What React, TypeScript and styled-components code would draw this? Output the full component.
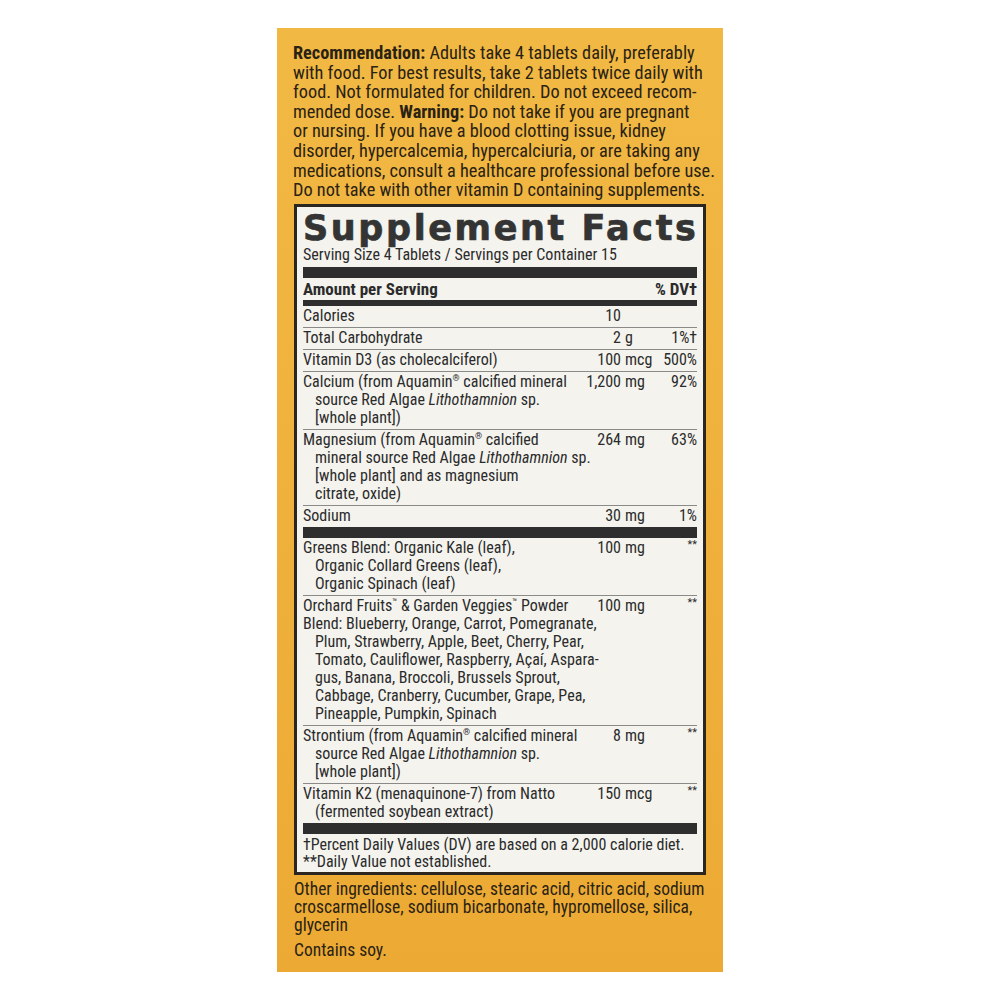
import React from "react";
import styled, { createGlobalStyle } from "styled-components";

const Global = createGlobalStyle`
  html, body { margin: 0; padding: 0; background: #ffffff; }
  body {
    font-family: Roboto, "Liberation Sans", sans-serif;
    font-stretch: 82%;
  }
`;

const Page = styled.div`
  display: flex;
  justify-content: center;
  padding-top: 28px;
  padding-bottom: 28px;
`;

const Panel = styled.div`
  width: 446px;
  height: 944px;
  box-sizing: border-box;
  padding: 15px 16px 0 16px;
  background: linear-gradient(180deg, #f1b944 0%, #efb13c 50%, #ecaa34 100%);
  color: #2a2214;
  display: flex;
  flex-direction: column;
`;

const Para = styled.div<{ $size?: number; $lh?: number }>`
  font-size: ${(p) => p.$size ?? 18.3}px;
  line-height: ${(p) => p.$lh ?? 19.6}px;
`;

const Line = styled.div<{ $indent?: boolean }>`
  white-space: nowrap;
  padding-left: ${(p) => (p.$indent ? 12 : 0)}px;
`;

const Facts = styled.div`
  margin: 4px 0 0 1px;
  width: 412px;
  box-sizing: border-box;
  border: 3px solid #2b2620;
  background: #f4f3ee;
  padding: 0 6px 0 6px;
  color: #2b2b2b;
  font-size: 16px;
  line-height: 18px;
`;

const Title = styled.div`
  font-family: "DejaVu Sans", sans-serif;
  font-stretch: normal;
  font-weight: 700;
  font-size: 35px;
  line-height: 36px;
  letter-spacing: 2.6px;
  color: #333433;
  -webkit-text-stroke: 0.7px #333433;
  white-space: nowrap;
  margin-top: 3px;
`;

const Serving = styled.div`
  font-size: 16px;
  line-height: 18px;
`;

const Bar = styled.div<{ $h: number; $mt?: number }>`
  height: ${(p) => p.$h}px;
  margin-top: ${(p) => p.$mt ?? 0}px;
  background: #2e2e2e;
`;

const Row = styled.div<{ $line?: boolean }>`
  display: grid;
  grid-template-columns: 274px 44px 36px 40px;
  border-top: ${(p) => (p.$line ? "1px solid #8a8a88" : "none")};
  padding: 1px 0 2px 0;
`;

const Name = styled.div``;

const Num = styled.div`
  text-align: right;
  white-space: nowrap;
`;

const Unit = styled.div`
  padding-left: 4px;
  white-space: nowrap;
`;

const DV = styled.div`
  text-align: right;
  white-space: nowrap;
`;

const Stars = styled.span`
  font-size: 11px;
  line-height: 10px;
  vertical-align: top;
  position: relative;
  top: 1px;
`;

const HeadRow = styled.div`
  display: flex;
  justify-content: space-between;
  font-weight: 700;
  font-size: 17px;
  line-height: 22px;
`;

const Sup = styled.sup`
  font-size: 9px;
  line-height: 0;
  vertical-align: 6px;
`;

const Foot = styled.div`
  padding: 2px 0 2px 0;
  font-size: 16px;
  line-height: 17px;
`;

const Other = styled(Para)`
  margin-top: 5px;
  padding-left: 1px;
`;

const Soy = styled(Para)`
  margin-top: 7px;
  padding-left: 1px;
`;

type Nut = {
  lines: { t: React.ReactNode; indent?: boolean }[];
  num: string;
  unit: string;
  dv: React.ReactNode;
  line?: boolean;
};

const stars = <Stars>**</Stars>;

const rowsA: Nut[] = [
  { lines: [{ t: "Calories" }], num: "10", unit: "", dv: "" },
  { lines: [{ t: "Total Carbohydrate" }], num: "2", unit: "g", dv: "1%†", line: true },
  { lines: [{ t: "Vitamin D3 (as cholecalciferol)" }], num: "100", unit: "mcg", dv: "500%", line: true },
  {
    lines: [
      { t: <>Calcium (from Aquamin<Sup>®</Sup> calcified mineral</> },
      { t: <>source Red Algae <i>Lithothamnion</i> sp.</>, indent: true },
      { t: "[whole plant])", indent: true },
    ],
    num: "1,200",
    unit: "mg",
    dv: "92%",
    line: true,
  },
  {
    lines: [
      { t: <>Magnesium (from Aquamin<Sup>®</Sup> calcified</> },
      { t: <>mineral source Red Algae <i>Lithothamnion</i> sp.</>, indent: true },
      { t: "[whole plant] and as magnesium", indent: true },
      { t: "citrate, oxide)", indent: true },
    ],
    num: "264",
    unit: "mg",
    dv: "63%",
    line: true,
  },
  { lines: [{ t: "Sodium" }], num: "30", unit: "mg", dv: "1%", line: true },
];

const rowsB: Nut[] = [
  {
    lines: [
      { t: "Greens Blend: Organic Kale (leaf)," },
      { t: "Organic Collard Greens (leaf),", indent: true },
      { t: "Organic Spinach (leaf)", indent: true },
    ],
    num: "100",
    unit: "mg",
    dv: stars,
  },
  {
    lines: [
      { t: <>Orchard Fruits<Sup>™</Sup> &amp; Garden Veggies<Sup>™</Sup> Powder</> },
      { t: "Blend: Blueberry, Orange, Carrot, Pomegranate," },
      { t: "Plum, Strawberry, Apple, Beet, Cherry, Pear,", indent: true },
      { t: "Tomato, Cauliflower, Raspberry, Açaí, Aspara-", indent: true },
      { t: "gus, Banana, Broccoli, Brussels Sprout,", indent: true },
      { t: "Cabbage, Cranberry, Cucumber, Grape, Pea,", indent: true },
      { t: "Pineapple, Pumpkin, Spinach", indent: true },
    ],
    num: "100",
    unit: "mg",
    dv: stars,
    line: true,
  },
  {
    lines: [
      { t: <>Strontium (from Aquamin<Sup>®</Sup> calcified mineral</> },
      { t: <>source Red Algae <i>Lithothamnion</i> sp.</>, indent: true },
      { t: "[whole plant])", indent: true },
    ],
    num: "8",
    unit: "mg",
    dv: stars,
    line: true,
  },
  {
    lines: [
      { t: "Vitamin K2 (menaquinone-7) from Natto" },
      { t: "(fermented soybean extract)", indent: true },
    ],
    num: "150",
    unit: "mcg",
    dv: stars,
    line: true,
  },
];

const NutRow: React.FC<{ r: Nut }> = ({ r }) => (
  <Row $line={r.line}>
    <Name>
      {r.lines.map((l, i) => (
        <Line key={i} $indent={l.indent}>
          {l.t}
        </Line>
      ))}
    </Name>
    <Num>{r.num}</Num>
    <Unit>{r.unit}</Unit>
    <DV>{r.dv}</DV>
  </Row>
);

export default function App() {
  return (
    <>
      <Global />
      <Page>
        <Panel>
          <Para>
            <Line>
              <b>Recommendation:</b> Adults take 4 tablets daily, preferably
            </Line>
            <Line>with food. For best results, take 2 tablets twice daily with</Line>
            <Line>food. Not formulated for children. Do not exceed recom-</Line>
            <Line>
              mended dose. <b>Warning:</b> Do not take if you are pregnant
            </Line>
            <Line>or nursing. If you have a blood clotting issue, kidney</Line>
            <Line>disorder, hypercalcemia, hypercalciuria, or are taking any</Line>
            <Line>medications, consult a healthcare professional before use.</Line>
            <Line>Do not take with other vitamin D containing supplements.</Line>
          </Para>
          <Facts>
            <Title>Supplement Facts</Title>
            <Serving>Serving Size 4 Tablets / Servings per Container 15</Serving>
            <Bar $h={11} $mt={3} />
            <HeadRow>
              <span>Amount per Serving</span>
              <span>% DV†</span>
            </HeadRow>
            <Bar $h={6} />
            {rowsA.map((r, i) => (
              <NutRow key={i} r={r} />
            ))}
            <Bar $h={11} />
            {rowsB.map((r, i) => (
              <NutRow key={i} r={r} />
            ))}
            <Bar $h={11} />
            <Foot>
              <Line>†Percent Daily Values (DV) are based on a 2,000 calorie diet.</Line>
              <Line>**Daily Value not established.</Line>
            </Foot>
          </Facts>
          <Other $size={17.5} $lh={18}>
            <Line>Other ingredients: cellulose, stearic acid, citric acid, sodium</Line>
            <Line>croscarmellose, sodium bicarbonate, hypromellose, silica,</Line>
            <Line>glycerin</Line>
          </Other>
          <Soy $size={17.5} $lh={18}>
            <Line>Contains soy.</Line>
          </Soy>
        </Panel>
      </Page>
    </>
  );
}
